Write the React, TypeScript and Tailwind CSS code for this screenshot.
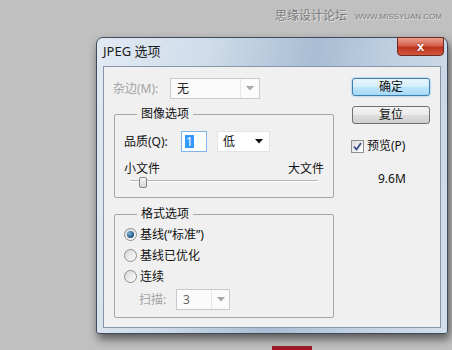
import React from 'react';

const Arrow: React.FC<{ color: string }> = ({ color }) => (
  <svg width="8" height="5" viewBox="0 0 8 5">
    <path d="M0 0H8L4 4.5Z" fill={color} />
  </svg>
);

const Radio: React.FC<{ checked?: boolean; label: string }> = ({ checked, label }) => (
  <div className="flex h-[21px] items-center">
    <div className="flex h-[13px] w-[13px] items-center justify-center rounded-full border border-[#8e8f8f] bg-[linear-gradient(135deg,#d8d8d8,#ffffff)]">
      {checked && <div className="h-[7px] w-[7px] rounded-full bg-[radial-gradient(circle_at_35%_35%,#7ab3dc,#1c4f7c_70%)]" />}
    </div>
    <span className="ml-[3px]">{label}</span>
  </div>
);

export default function App() {
  return (
    <div className="h-[350px] w-[452px] overflow-hidden bg-[#c0c0c0] font-['Noto_Sans','Noto_Sans_CJK_SC',sans-serif] text-[12px] leading-[14px] text-[#111]">
      {/* watermark */}
      <div className="flex h-[37px] items-start justify-end gap-[8px] pr-[10px] pt-[9px] text-[#7b7b7b]">
        <span className="text-[12px] leading-[14px] [text-shadow:1px_1px_0_#e0e0e0]">思缘设计论坛</span>
        <span className="pt-[3px] font-['Liberation_Sans',sans-serif] text-[8px] leading-[9px] [text-shadow:1px_1px_0_#e0e0e0]">
          WWW.MISSYUAN.COM
        </span>
      </div>

      {/* dialog */}
      <div className="ml-[96px] flex h-[297px] w-[352px] flex-col rounded-t-[7px] rounded-b-[3px] border border-[#3f4b5a] bg-[linear-gradient(100deg,#e2eaf3_0%,#cfdcea_28%,#a8bdd3_55%,#c0d0e2_75%,#d3dfeb_100%)] shadow-[2px_5px_10px_rgba(0,0,0,0.55)]">
        <div className="flex h-[28px] shrink-0 items-start justify-between pl-[6px] pr-[3px]">
          <span className="pt-[5px] text-[13px] leading-[16px] text-[#1b1b1b]">JPEG 选项</span>
          <div className="-mt-px flex h-[19px] w-[47px] items-center justify-center rounded-b-[4px] border border-[#6b2b20] bg-[linear-gradient(180deg,#e9a08e_0%,#d4604a_45%,#c0321e_55%,#d0573f_100%)]">
            <span className="font-['Liberation_Sans',sans-serif] text-[13px] font-bold leading-[13px] text-white [text-shadow:0_0_2px_#6b1b10]">x</span>
          </div>
        </div>

        <div className="mx-[6px] mb-[5px] flex flex-1 border border-[#8797ab] bg-[#f0f0f0] pt-[11px]">
          {/* left column */}
          <div className="w-[230px] shrink-0 pl-[9px]">
            <div className="flex h-[21px] items-center">
              <span className="w-[57px] text-[#a3a3a3]">杂边(M):</span>
              <div className="flex h-[21px] w-[90px] items-center border border-[#cacaca] bg-[#fbfbfb]">
                <span className="flex-1 pl-[6px] text-[#222]">无</span>
                <div className="flex h-full w-[19px] items-center justify-center border-l border-[#e6e6e6]">
                  <Arrow color="#a8a8a8" />
                </div>
              </div>
            </div>

            <fieldset className="ml-[1px] mt-[7px] w-[220px] rounded-[2px] border border-[#a6a6a6] pb-[9px] pl-[9px] pr-[9px]">
              <legend className="ml-[13px] px-[4px] leading-[16px]">图像选项</legend>
              <div className="mt-[9px] flex h-[21px] items-center">
                <span className="w-[57px]">品质(Q):</span>
                <div className="flex h-[21px] w-[26px] items-center border border-[#7eb4ea] bg-white pl-[3px]">
                  <span className="bg-[#3399ff] px-[1px] leading-[13px] text-white">1</span>
                </div>
                <div className="ml-[10px] flex h-[21px] w-[53px] items-center justify-between border border-[#e3e3e3] bg-white pl-[5px] pr-[6px]">
                  <span>低</span>
                  <Arrow color="#111" />
                </div>
              </div>
              <div className="mt-[10px] flex justify-between">
                <span>小文件</span>
                <span>大文件</span>
              </div>
              <div className="relative ml-[6px] mr-[6px] h-[12px]">
                <div className="absolute left-0 right-0 top-[4px] h-[2px] border-t border-[#b4b4b4] bg-white" />
                <div className="absolute left-[9px] top-[1px] h-[11px] w-[8px] rounded-[2px] border border-[#888] bg-[linear-gradient(180deg,#f6f6f6,#d6d6d6)]" />
              </div>
            </fieldset>

            <fieldset className="ml-[1px] mt-[8px] w-[220px] rounded-[2px] border border-[#a6a6a6] pb-[7px] pl-[9px]">
              <legend className="ml-[13px] px-[4px] leading-[16px]">格式选项</legend>
              <div className="mt-[2px]">
                <Radio checked label="基线(“标准”)" />
                <Radio label="基线已优化" />
                <Radio label="连续" />
              </div>
              <div className="mt-[2px] flex h-[21px] items-center pl-[15px]">
                <span className="w-[37px] text-[#a3a3a3]">扫描:</span>
                <div className="flex h-[21px] w-[54px] items-center border border-[#cacaca] bg-[#fbfbfb]">
                  <span className="flex-1 pl-[6px] text-[#666]">3</span>
                  <div className="flex h-full w-[18px] items-center justify-center border-l border-[#e6e6e6]">
                    <Arrow color="#a8a8a8" />
                  </div>
                </div>
              </div>
            </fieldset>
          </div>

          {/* right column */}
          <div className="ml-[18px] w-[78px] shrink-0">
            <button className="flex h-[18px] w-[78px] items-center justify-center rounded-[3px] border border-[#3c7fb1] bg-[linear-gradient(180deg,#e8f6fd_0%,#d4eefb_50%,#bee6fd_51%,#a7d9f5_100%)] shadow-[0_0_2px_#58b1e8] leading-[14px]">
              确定
            </button>
            <button className="mt-[10px] flex h-[18px] w-[78px] items-center justify-center rounded-[3px] border border-[#707070] bg-[linear-gradient(180deg,#f2f2f2_0%,#ebebeb_50%,#dddddd_51%,#cfcfcf_100%)] leading-[14px]">
              复位
            </button>
            <div className="-ml-px mt-[15px] flex items-center">
              <div className="flex h-[13px] w-[13px] items-center justify-center border border-[#8e8f8f] bg-[linear-gradient(135deg,#dcdcdc,#ffffff)]">
                <svg width="9" height="9" viewBox="0 0 9 9">
                  <path d="M1 4.5L3.5 7.5L8 1" fill="none" stroke="#3d4f8a" strokeWidth="1.8" />
                </svg>
              </div>
              <span className="ml-[3px]">预览(P)</span>
            </div>
            <div className="ml-[26px] mt-[19px]">9.6M</div>
          </div>
        </div>
      </div>

      <div className="ml-[272px] mt-[12px] h-[8px] w-[40px] bg-[#9c1b2b]" />
    </div>
  );
}
